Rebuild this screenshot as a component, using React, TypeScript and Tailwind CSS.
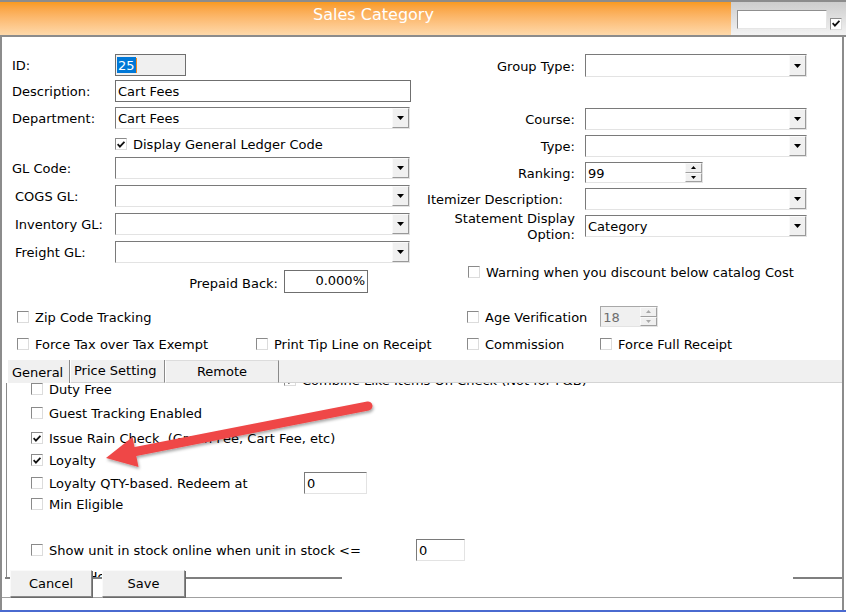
import React from "react";

const sunken =
  "border border-t-[#7a7a7a] border-l-[#7a7a7a] border-b-[#e3e3e3] border-r-[#e3e3e3]";

function Tri({ color = "#000" }: { color?: string }) {
  return (
    <svg width="7" height="4" viewBox="0 0 7 4">
      <path d="M0 0H7L3.5 4Z" fill={color} />
    </svg>
  );
}

function DropBtn() {
  return (
    <div className="w-[17px] h-full flex items-center justify-center bg-[#f0f0f0] border border-t-[#fafafa] border-l-[#fafafa] border-b-[#999999] border-r-[#999999]">
      <Tri />
    </div>
  );
}

function Select({ value, className }: { value?: string; className: string }) {
  return (
    <div className={`flex bg-white ${sunken} ${className}`}>
      <div className="flex-1 pl-[2px] pt-[1px] leading-[20px] whitespace-nowrap overflow-hidden">
        {value}
      </div>
      <DropBtn />
    </div>
  );
}

function Spinner({ disabled }: { disabled?: boolean }) {
  const c = disabled ? "#a8a8a8" : "#000";
  return (
    <div className="w-[17px] h-full flex flex-col">
      <div className="flex-1 flex items-center justify-center bg-[#f0f0f0] border border-t-[#fafafa] border-l-[#fafafa] border-b-[#a0a0a0] border-r-[#a0a0a0]">
        <svg width="5" height="3" viewBox="0 0 5 3">
          <path d="M0 3H5L2.5 0Z" fill={c} />
        </svg>
      </div>
      <div className="flex-1 flex items-center justify-center bg-[#f0f0f0] border border-t-[#fafafa] border-l-[#fafafa] border-b-[#a0a0a0] border-r-[#a0a0a0]">
        <svg width="5" height="3" viewBox="0 0 5 3">
          <path d="M0 0H5L2.5 3Z" fill={c} />
        </svg>
      </div>
    </div>
  );
}

function Cb({ checked }: { checked?: boolean }) {
  return (
    <span className="inline-flex w-[12px] h-[12px] shrink-0 items-center justify-center bg-white border border-t-[#8a8a8a] border-l-[#8a8a8a] border-b-[#dcdcdc] border-r-[#dcdcdc]">
      {checked && (
        <svg width="8" height="7" viewBox="0 0 8 7">
          <path d="M0.6 3.2 L2.9 5.6 L7.4 0.8" stroke="#111" strokeWidth="1.8" fill="none" />
        </svg>
      )}
    </span>
  );
}

function CbLabel({ checked, children }: { checked?: boolean; children: React.ReactNode }) {
  return (
    <div className="flex items-center gap-[6px] whitespace-nowrap">
      <Cb checked={checked} />
      <span className="pt-[2px]">{children}</span>
    </div>
  );
}

function Arrow() {
  return (
    <svg
      className="absolute left-0 top-0 pointer-events-none"
      width="846"
      height="612"
      viewBox="0 0 846 612"
    >
      <defs>
        <filter id="sh" x="-20%" y="-20%" width="140%" height="140%">
          <feDropShadow dx="1" dy="2" stdDeviation="1.6" floodColor="#000" floodOpacity="0.35" />
        </filter>
      </defs>
      <g filter="url(#sh)" fill="#ef4747">
        <line x1="368" y1="406" x2="128" y2="453" stroke="#ef4747" strokeWidth="9" strokeLinecap="round" />
        <polygon points="106,458 132.5,437 138.5,467" />
      </g>
    </svg>
  );
}

const lbl = "pt-[2px]";

export default function App() {
  return (
    <div className="w-[846px] h-[612px] bg-white relative overflow-hidden flex flex-col font-['DejaVu_Sans',Verdana,sans-serif] text-[13px] text-black">
      {/* top border */}
      <div className="h-[2px] bg-[#8c8c8c] shrink-0" />
      {/* title bar */}
      <div className="h-[33px] flex shrink-0">
        <div className="w-[731px] bg-gradient-to-b from-[#f89a1e] to-[#fed9aa] text-white text-[16px] flex justify-center pt-[1px] pl-[16px]">
          Sales Category
        </div>
        <div className="flex-1 bg-gradient-to-b from-[#cdcdcd] to-[#f3f3f3] flex items-start pt-[8px] pl-[6px] gap-[3px]">
          <div className="w-[90px] h-[19px] bg-white border border-t-[#8f8f8f] border-l-[#8f8f8f] border-b-[#e6e6e6] border-r-[#e6e6e6]" />
          <div className="mt-[3px]">
            <Cb checked />
          </div>
        </div>
      </div>
      <div className="h-[2px] bg-[#8c8c8c] shrink-0" />

      {/* body */}
      <div className="flex-1 flex flex-col border-l-2 border-r-2 border-[#8c8c8c] w-[844px] relative">
        <div className="h-[540px] flex flex-col">
          {/* top two columns */}
          <div className="flex pt-[17px]">
            {/* left col */}
            <div className="w-[418px] pl-[10px] flex flex-col">
              <div className="h-[22px] flex items-center">
                <div className={`w-[103px] ${lbl}`}>ID:</div>
                <div className="w-[71px] h-[22px] bg-[#f0f0f0] border border-[#6f6f6f] flex items-center pl-[1px]">
                  <span className="bg-[#0078d7] text-white leading-[15px] pt-[1px] px-[1px]">25</span>
                  <span className="w-[1px] h-[15px] bg-[#f08a24]" />
                </div>
              </div>
              <div className="h-[22px] mt-[4px] flex items-center">
                <div className={`w-[103px] ${lbl}`}>Description:</div>
                <div className="w-[296px] h-[22px] border border-[#6f6f6f] bg-white pl-[2px] pt-[1px] leading-[20px]">
                  Cart Fees
                </div>
              </div>
              <div className="h-[22px] mt-[5px] flex items-center">
                <div className={`w-[103px] ${lbl}`}>Department:</div>
                <Select value="Cart Fees" className="w-[295px] h-[22px]" />
              </div>
              <div className="h-[16px] mt-[7px] flex items-center pl-[103px]">
                <CbLabel checked>Display General Ledger Code</CbLabel>
              </div>
              <div className="h-[22px] mt-[5px] flex items-center">
                <div className={`w-[103px] ${lbl}`}>GL Code:</div>
                <Select className="w-[295px] h-[22px]" />
              </div>
              <div className="h-[22px] mt-[6px] flex items-center">
                <div className={`w-[103px] pl-[3px] ${lbl}`}>COGS GL:</div>
                <Select className="w-[295px] h-[22px]" />
              </div>
              <div className="h-[22px] mt-[6px] flex items-center">
                <div className={`w-[103px] pl-[3px] ${lbl}`}>Inventory GL:</div>
                <Select className="w-[295px] h-[22px]" />
              </div>
              <div className="h-[22px] mt-[6px] flex items-center">
                <div className={`w-[103px] pl-[3px] ${lbl}`}>Freight GL:</div>
                <Select className="w-[295px] h-[22px]" />
              </div>
              <div className="h-[23px] mt-[7px] w-[356px] flex items-center justify-end gap-[6px]">
                <div className="pt-[5px]">Prepaid Back:</div>
                <div className="w-[84px] h-[23px] border border-[#6f6f6f] bg-white text-right pr-[2px] pt-[1px] leading-[18px]">
                  0.000%
                </div>
              </div>
            </div>
            {/* right col */}
            <div className="flex flex-col">
              <div className="h-[23px] flex items-center">
                <div className={`w-[155px] text-right ${lbl}`}>Group Type:</div>
                <Select className="w-[222px] h-[23px] ml-[10px]" />
              </div>
              <div className="h-[22px] mt-[31px] flex items-center">
                <div className={`w-[155px] text-right ${lbl}`}>Course:</div>
                <Select className="w-[222px] h-[22px] ml-[10px]" />
              </div>
              <div className="h-[22px] mt-[5px] flex items-center">
                <div className={`w-[155px] text-right ${lbl}`}>Type:</div>
                <Select className="w-[222px] h-[22px] ml-[10px]" />
              </div>
              <div className="h-[21px] mt-[5px] flex items-center">
                <div className={`w-[155px] text-right ${lbl}`}>Ranking:</div>
                <div className={`w-[118px] h-[21px] ml-[10px] flex bg-white ${sunken}`}>
                  <div className="flex-1 pl-[2px] leading-[20px] pt-[1px]">99</div>
                  <Spinner />
                </div>
              </div>
              <div className="h-[22px] mt-[5px] flex items-center">
                <div className={`w-[155px] text-right pr-[12px] whitespace-nowrap ${lbl}`}>
                  Itemizer Description:
                </div>
                <Select className="w-[222px] h-[22px] ml-[10px]" />
              </div>
              <div className="h-[22px] mt-[5px] flex items-center">
                <div className="w-[155px] text-right leading-[16px] pt-[1px]">
                  Statement Display
                  <br />
                  Option:
                </div>
                <Select value="Category" className="w-[222px] h-[22px] ml-[10px]" />
              </div>
              <div className="h-[16px] mt-[27px] flex items-center pl-[48px]">
                <CbLabel>Warning when you discount below catalog Cost</CbLabel>
              </div>
            </div>
          </div>

          {/* checkbox row A */}
          <div className="h-[21px] mt-[13px] flex items-center">
            <div className="w-[465px] pl-[15px] pt-[1px]">
              <CbLabel>Zip Code Tracking</CbLabel>
            </div>
            <CbLabel>Age Verification</CbLabel>
            <div className="ml-[13px] w-[58px] h-[21px] flex bg-[#f0f0f0] border border-t-[#a8a8a8] border-l-[#a8a8a8] border-b-[#e3e3e3] border-r-[#e3e3e3]">
              <div className="flex-1 pl-[2px] pt-[1px] leading-[19px] text-[#6d6d6d]">18</div>
              <Spinner disabled />
            </div>
          </div>
          {/* checkbox row B */}
          <div className="h-[16px] mt-[9px] flex items-center">
            <div className="w-[254px] pl-[15px]">
              <CbLabel>Force Tax over Tax Exempt</CbLabel>
            </div>
            <div className="w-[211px]">
              <CbLabel>Print Tip Line on Receipt</CbLabel>
            </div>
            <div className="w-[133px]">
              <CbLabel>Commission</CbLabel>
            </div>
            <CbLabel>Force Full Receipt</CbLabel>
          </div>

          {/* tab strip */}
          <div className="h-[23px] mt-[8px] ml-[6px] bg-[#f0f0f0] flex items-stretch">
            <div className="w-[61px] pl-[4px] pt-[5px] leading-[16px]">General</div>
            <div className="w-[1px] bg-[#8a8a8a]" />
            <div className="w-[95px] border-l border-l-white border-r border-r-[#8a8a8a] border-b border-b-[#d4d4d4] pl-[3px] pt-[3px] leading-[16px]">
              Price Setting
            </div>
            <div className="w-[114px] border-l border-l-white border-t border-t-[#dcdcdc] border-r border-r-[#8a8a8a] border-b border-b-[#d4d4d4] text-center pt-[3px] leading-[16px]">
              Remote
            </div>
            <div className="flex-1 border-b border-b-[#d4d4d4]" />
          </div>

          {/* tab content */}
          <div className="h-[194px] ml-[4px] border-l border-[#8a8a8a] overflow-hidden">
            <div className="flex flex-col pl-[24px] -mt-[2px]">
              <div className="h-[16px] flex items-start">
                <div className="w-[253px] h-[16px] flex items-center">
                  <CbLabel>Duty Free</CbLabel>
                </div>
                <div className="h-[16px] -mt-[9px] flex items-center">
                  <CbLabel checked>Combine Like Items On Check (Not for F&amp;B)</CbLabel>
                </div>
              </div>
              <div className="h-[16px] mt-[8px] flex items-center">
                <CbLabel>Guest Tracking Enabled</CbLabel>
              </div>
              <div className="h-[16px] mt-[9px] flex items-center">
                <CbLabel checked>Issue Rain Check&nbsp; (Green Fee, Cart Fee, etc)</CbLabel>
              </div>
              <div className="h-[16px] mt-[6px] flex items-center">
                <CbLabel checked>Loyalty</CbLabel>
              </div>
              <div className="h-[22px] mt-[4px] flex items-center">
                <div className="w-[273px]">
                  <CbLabel>Loyalty QTY-based. Redeem at</CbLabel>
                </div>
                <div className={`w-[63px] h-[22px] bg-white pl-[2px] pt-[1px] leading-[20px] ${sunken}`}>0</div>
              </div>
              <div className="h-[16px] mt-[2px] flex items-center">
                <CbLabel>Min Eligible</CbLabel>
              </div>
              <div className="h-[22px] mt-[27px] flex items-center">
                <div className="w-[385px]">
                  <CbLabel>Show unit in stock online when unit in stock &lt;=</CbLabel>
                </div>
                <div className={`w-[49px] h-[22px] bg-white pl-[2px] pt-[1px] leading-[20px] ${sunken}`}>0</div>
              </div>
              <div className="h-[16px] mt-[7px] flex items-center">
                <CbLabel>Allow Hold</CbLabel>
              </div>
            </div>
          </div>
        </div>

        {/* bottom group lines */}
        <div className="h-[2px] flex shrink-0">
          <div className="w-[337px] ml-[3px] bg-[#7f7f7f]" />
          <div className="flex-1" />
          <div className="w-[49px] bg-[#7f7f7f]" />
        </div>
        <div className="h-[18px] shrink-0" />
        <div className="h-[1px] bg-[#a0a0a0] shrink-0" />
        <div className="flex-1" />

        {/* buttons overlaying the tab content */}
        <div className="absolute left-[8px] top-[533px] flex gap-[10px]">
          <button className="w-[82px] h-[27px] bg-[#f0f0f0] border border-t-[#fafafa] border-l-[#fafafa] border-b-[#8a8a8a] border-r-[#8a8a8a] shadow-[1px_1px_0_#6a6a6a] leading-[24px]">
            Cancel
          </button>
          <button className="w-[83px] h-[27px] bg-[#f0f0f0] border border-t-[#fafafa] border-l-[#fafafa] border-b-[#8a8a8a] border-r-[#8a8a8a] shadow-[1px_1px_0_#6a6a6a] leading-[24px]">
            Save
          </button>
        </div>
      </div>
      <div className="h-[2px] bg-[#4a6ad0] shrink-0" />

      <Arrow />
    </div>
  );
}
